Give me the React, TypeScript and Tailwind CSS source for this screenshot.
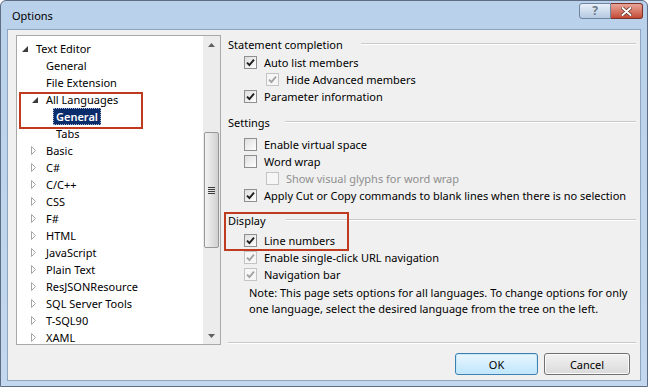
import React from 'react';

type TreeItem = {
  label: string;
  level: 0 | 1 | 2;
  arrow?: 'open' | 'closed';
  selected?: boolean;
};

const tree: TreeItem[] = [
  { label: 'Text Editor', level: 0, arrow: 'open' },
  { label: 'General', level: 1 },
  { label: 'File Extension', level: 1 },
  { label: 'All Languages', level: 1, arrow: 'open' },
  { label: 'General', level: 2, selected: true },
  { label: 'Tabs', level: 2 },
  { label: 'Basic', level: 1, arrow: 'closed' },
  { label: 'C#', level: 1, arrow: 'closed' },
  { label: 'C/C++', level: 1, arrow: 'closed' },
  { label: 'CSS', level: 1, arrow: 'closed' },
  { label: 'F#', level: 1, arrow: 'closed' },
  { label: 'HTML', level: 1, arrow: 'closed' },
  { label: 'JavaScript', level: 1, arrow: 'closed' },
  { label: 'Plain Text', level: 1, arrow: 'closed' },
  { label: 'ResJSONResource', level: 1, arrow: 'closed' },
  { label: 'SQL Server Tools', level: 1, arrow: 'closed' },
  { label: 'T-SQL90', level: 1, arrow: 'closed' },
  { label: 'XAML', level: 1, arrow: 'closed' },
];

const indentClass = ['pl-[5px]', 'pl-[15px]', 'pl-[25px]'];

const Arrow = ({ kind }: { kind?: 'open' | 'closed' }) => {
  if (kind === 'open') {
    return (
      <svg width="6" height="6" viewBox="0 0 6 6" className="mt-[1px]">
        <path d="M6 0 L6 6 L0 6 Z" fill="#3c3c3c" />
      </svg>
    );
  }
  if (kind === 'closed') {
    return (
      <svg width="5" height="9" viewBox="0 0 5 9" className="-ml-[1px]">
        <path d="M0.5 0.5 L4.5 4.5 L0.5 8.5 Z" fill="#ffffff" stroke="#a6a6a6" strokeWidth="1" />
      </svg>
    );
  }
  return null;
};

const TreeRow = ({ item }: { item: TreeItem }) => (
  <div className={`h-[17px] flex items-center whitespace-nowrap ${indentClass[item.level]}`}>
    <span className="w-[11px] h-full flex items-center shrink-0">
      <Arrow kind={item.arrow} />
    </span>
    <span
      className={
        item.selected
          ? 'h-full flex items-center px-[3px] bg-[#0b2c6b] text-white font-semibold outline-1 outline-dotted outline-[#9fb0d0] -outline-offset-1'
          : 'h-full flex items-center px-[3px] text-black'
      }
    >
      {item.label}
    </span>
  </div>
);

const Scrollbar = () => (
  <div className="w-[17px] h-full bg-[#ececec] flex flex-col shrink-0">
    <div className="h-[17px] flex items-center justify-center">
      <svg width="7" height="4" viewBox="0 0 7 4">
        <path d="M0 4 L3.5 0 L7 4 Z" fill="#606060" />
      </svg>
    </div>
    <div className="h-[79px]" />
    <div className="h-[116px] mx-[1px] rounded-[2px] border border-[#979797] bg-gradient-to-r from-[#f3f3f3] via-[#e2e2e2] to-[#d0d0d0] flex items-center justify-center">
      <div className="flex flex-col gap-[1px]">
        <div className="w-[7px] h-px bg-[#3d3d3d]" />
        <div className="w-[7px] h-px bg-[#3d3d3d]" />
        <div className="w-[7px] h-px bg-[#3d3d3d]" />
        <div className="w-[7px] h-px bg-[#3d3d3d]" />
      </div>
    </div>
    <div className="flex-1" />
    <div className="h-[17px] flex items-center justify-center">
      <svg width="7" height="4" viewBox="0 0 7 4">
        <path d="M0 0 L3.5 4 L7 0 Z" fill="#606060" />
      </svg>
    </div>
  </div>
);

const CheckBox = ({ checked, disabled }: { checked?: boolean; disabled?: boolean }) => (
  <span
    className={
      disabled
        ? 'w-[13px] h-[13px] shrink-0 border border-[#c4c4c4] bg-[#f6f6f6] flex items-center justify-center'
        : 'w-[13px] h-[13px] shrink-0 border border-[#8e8f8f] bg-gradient-to-br from-[#dedede] to-[#ffffff] flex items-center justify-center'
    }
  >
    {checked && (
      <svg width="9" height="9" viewBox="0 0 9 9">
        <path
          d="M1 4.6 L3.4 7 L8 1.6"
          fill="none"
          stroke={disabled ? '#a3a3a3' : '#1e1e1e'}
          strokeWidth="1.9"
        />
      </svg>
    )}
  </span>
);

const Option = ({
  label,
  checked,
  disabled,
  dimText,
  indent,
}: {
  label: string;
  checked?: boolean;
  disabled?: boolean;
  dimText?: boolean;
  indent?: boolean;
}) => (
  <div className={`h-[17px] flex items-center gap-[7px] whitespace-nowrap ${indent ? 'pl-[38px]' : 'pl-[16px]'}`}>
    <CheckBox checked={checked} disabled={disabled} />
    <span className={dimText ? 'text-[#8f8f8f]' : 'text-black'}>{label}</span>
  </div>
);

const Header = ({ title, gap }: { title: string; gap: string }) => (
  <div className="h-[18px] flex items-center">
    <span className="text-black">{title}</span>
    <div className={`flex-1 flex flex-col ${gap}`}>
      <div className="h-px bg-[#c9c9c9]" />
      <div className="h-px bg-white" />
    </div>
  </div>
);

export default function App() {
  return (
    <div
      className="w-[648px] h-[387px] bg-gradient-to-b from-[#b9d1ea] to-[#c3d8ee] border border-[#5d6e84] rounded-t-[6px] flex flex-col text-[11px] leading-none"
      style={{ fontFamily: '"Noto Sans", "Open Sans", sans-serif' }}
    >
      {/* title bar */}
      <div className="h-[28px] flex items-start justify-between pl-[11px] pr-[4px]">
        <span className="mt-[9px] text-black">Options</span>
        <div className="flex mt-[2px]">
          <div className="w-[32px] h-[16px] rounded-l-[3px] border border-[#6f84a0] bg-gradient-to-b from-[#e8f0f9] to-[#b5c9e1] flex items-center justify-center">
            <span className="text-[12px] font-bold text-[#6c7b8c]">?</span>
          </div>
          <div className="w-[32px] h-[16px] rounded-r-[3px] border border-l-0 border-[#7c3226] bg-gradient-to-b from-[#e8a598] to-[#c34a37] flex items-center justify-center">
            <svg width="11" height="9" viewBox="0 0 11 9">
              <path d="M1.5 1 L9.5 8 M9.5 1 L1.5 8" stroke="#5a2a22" strokeWidth="3.4" strokeLinecap="round" />
              <path d="M1.5 1 L9.5 8 M9.5 1 L1.5 8" stroke="#ffffff" strokeWidth="2" strokeLinecap="round" />
            </svg>
          </div>
        </div>
      </div>

      {/* client area */}
      <div className="mx-[6px] mb-[5px] flex-1 bg-[#f0f0f0] border border-[#8fa4be] flex flex-col">
        <div className="flex pt-[5px] pl-[8px] pr-[4px]">
          {/* tree */}
          <div className="relative w-[205px] h-[310px] bg-white border border-[#a9a9a9] flex shrink-0">
            <div className="flex-1 pt-[4px]">
              {tree.map((item, i) => (
                <TreeRow key={i} item={item} />
              ))}
            </div>
            <Scrollbar />
            <div className="absolute left-[2px] top-[56px] w-[124px] h-[37px] border-2 border-[#bf3a1f]" />
          </div>

          {/* settings */}
          <div className="relative ml-[7px] flex-1 h-[310px] flex flex-col">
            <Header title="Statement completion" gap="ml-[18px]" />
            <div className="mt-[1px]">
              <Option label="Auto list members" checked />
              <Option label="Hide Advanced members" checked disabled indent />
              <Option label="Parameter information" checked />
            </div>

            <div className="mt-[8px]">
              <Header title="Settings" gap="ml-[15px]" />
            </div>
            <div className="mt-[5px]">
              <Option label="Enable virtual space" />
              <Option label="Word wrap" />
              <Option label="Show visual glyphs for word wrap" disabled dimText indent />
              <Option label="Apply Cut or Copy commands to blank lines when there is no selection" checked />
            </div>

            <div className="mt-[7px]">
              <Header title="Display" gap="ml-[20px]" />
            </div>
            <div className="mt-[3px]">
              <Option label="Line numbers" checked />
              <Option label="Enable single-click URL navigation" checked disabled />
              <Option label="Navigation bar" checked disabled />
            </div>
            <p className="mt-[2px] pl-[21px] leading-[16px] text-black whitespace-nowrap">
              Note: This page sets options for all languages. To change options for only
              <br />
              one language, select the desired language from the tree on the left.
            </p>

            <div className="mt-auto mb-[1px] flex flex-col">
              <div className="h-px bg-[#c9c9c9]" />
              <div className="h-px bg-white" />
            </div>

            <div className="absolute left-[-4px] top-[177px] w-[125px] h-[39px] border-2 border-[#bf3a1f]" />
          </div>
        </div>

        {/* buttons */}
        <div className="mt-[8px] flex justify-end gap-[6px] pr-[10px]">
          <button className="w-[83px] h-[22px] rounded-[3px] border border-[#3c7fb1] bg-gradient-to-b from-[#eaf6fd] to-[#bee6fd] text-black shadow-[inset_0_0_0_1px_#c8e8fa]">
            OK
          </button>
          <button className="w-[86px] h-[22px] rounded-[3px] border border-[#707070] bg-gradient-to-b from-[#f2f2f2] to-[#dadada] text-black shadow-[inset_0_0_0_1px_#fbfbfb]">
            Cancel
          </button>
        </div>
      </div>
    </div>
  );
}
